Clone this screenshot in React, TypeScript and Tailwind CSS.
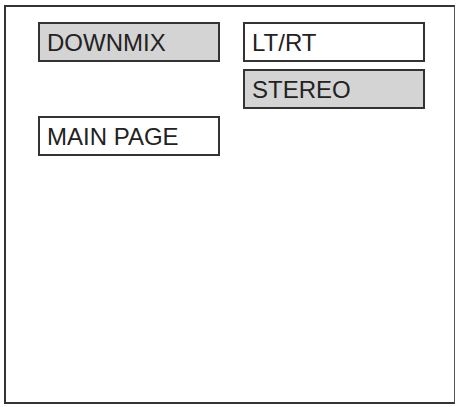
import React from "react";

type BoxProps = { label: string; active?: boolean };

function MenuBox({ label, active }: BoxProps) {
  return (
    <div
      className={`flex h-[40px] w-[182px] items-center border-2 border-[#333] pl-[7px] text-[24px] leading-none text-[#222] ${
        active ? "bg-[#d4d4d4]" : "bg-white"
      }`}
    >
      <span className="pt-[1px]">{label}</span>
    </div>
  );
}

export default function App() {
  return (
    <div
      className="h-[407px] w-[456px] bg-white pl-[4px] pt-[5px]"
      style={{ fontFamily: '"Liberation Sans", Arial, sans-serif' }}
    >
      <div className="h-[399px] w-[451px] border-2 border-r border-[#333] border-r-[#555] pl-[32px] pt-[15px]">
        <div className="grid grid-cols-[182px_182px] gap-x-[23px] gap-y-[7px]">
          <MenuBox label="DOWNMIX" active />
          <MenuBox label="LT/RT" />
          <div />
          <MenuBox label="STEREO" active />
          <MenuBox label="MAIN PAGE" />
        </div>
      </div>
    </div>
  );
}
